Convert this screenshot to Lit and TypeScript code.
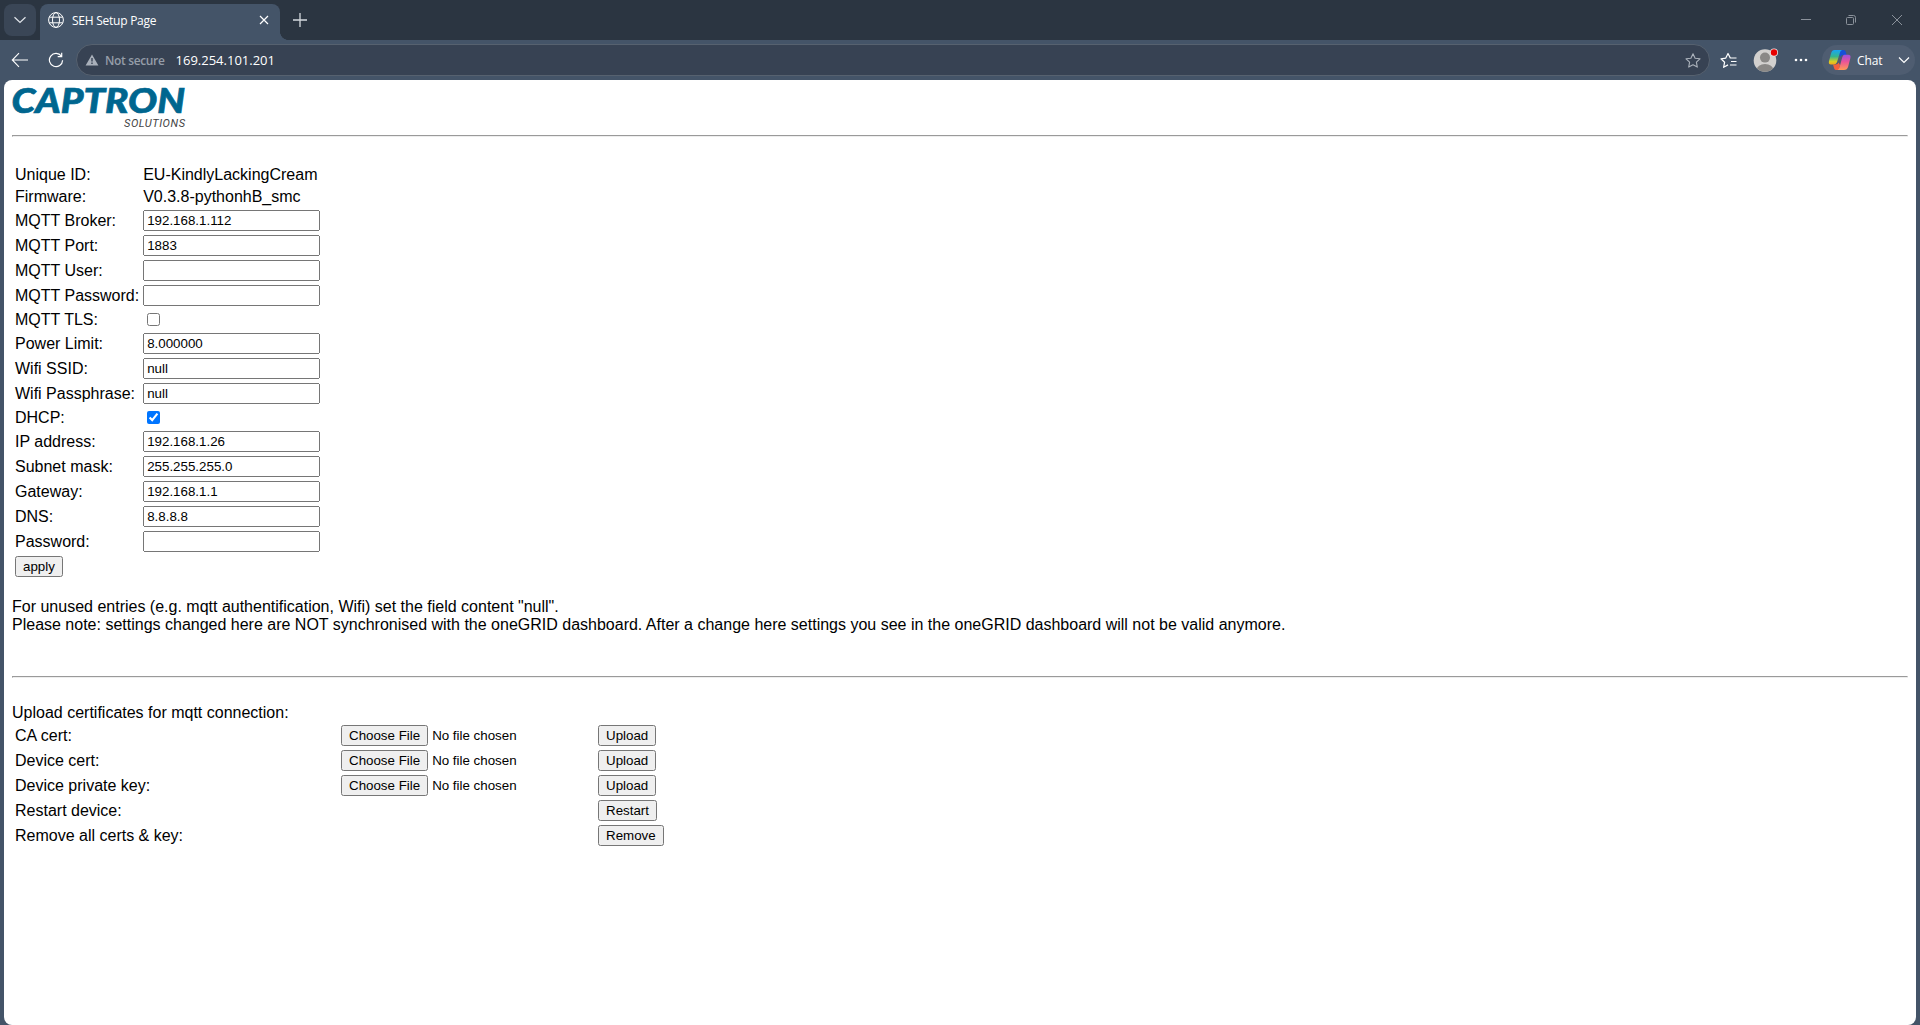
import { LitElement, html, css, nothing } from "lit";
import { customElement } from "lit/decorators.js";

type Field = { label: string; kind: "text" | "input" | "check"; value?: string; on?: boolean };

const FIELDS: Field[] = [
  { label: "Unique ID:", kind: "text", value: "EU-KindlyLackingCream" },
  { label: "Firmware:", kind: "text", value: "V0.3.8-pythonhB_smc" },
  { label: "MQTT Broker:", kind: "input", value: "192.168.1.112" },
  { label: "MQTT Port:", kind: "input", value: "1883" },
  { label: "MQTT User:", kind: "input", value: "" },
  { label: "MQTT Password:", kind: "input", value: "" },
  { label: "MQTT TLS:", kind: "check", on: false },
  { label: "Power Limit:", kind: "input", value: "8.000000" },
  { label: "Wifi SSID:", kind: "input", value: "null" },
  { label: "Wifi Passphrase:", kind: "input", value: "null" },
  { label: "DHCP:", kind: "check", on: true },
  { label: "IP address:", kind: "input", value: "192.168.1.26" },
  { label: "Subnet mask:", kind: "input", value: "255.255.255.0" },
  { label: "Gateway:", kind: "input", value: "192.168.1.1" },
  { label: "DNS:", kind: "input", value: "8.8.8.8" },
  { label: "Password:", kind: "input", value: "" },
];

const ACTIONS = [
  { label: "CA cert:", file: true, button: "Upload" },
  { label: "Device cert:", file: true, button: "Upload" },
  { label: "Device private key:", file: true, button: "Upload" },
  { label: "Restart device:", file: false, button: "Restart" },
  { label: "Remove all certs & key:", file: false, button: "Remove" },
];

const STAR = "M8 1.2 L10.1 5.7 L15 6.3 L11.4 9.7 L12.3 14.6 L8 12.2 L3.7 14.6 L4.6 9.7 L1 6.3 L5.9 5.7 Z";

@customElement("browser-bar")
class BrowserBar extends LitElement {
  static styles = css`
    :host { display: block; font-family: "Open Sans", "Noto Sans", sans-serif; color: #fff; }
    svg { display: block; flex: none; fill: none; stroke: currentColor; }
    .tabs { height: 40px; background: #2b3541; display: flex; align-items: flex-start; }
    .menu { width: 32px; height: 32px; margin: 4px 4px 0; border-radius: 8px; background: #3a4656; display: grid; place-items: center; color: #dfe3e8; }
    .tab { box-sizing: border-box; width: 240px; height: 36px; margin-top: 4px; padding: 0 11px 4px 8px; border-radius: 8px 8px 0 0; background: #445468; display: flex; align-items: center; }
    .foot { width: 8px; height: 8px; align-self: flex-end; background: radial-gradient(circle at 100% 0, transparent 7.6px, #445468 8px); }
    .title { flex: 1; margin-left: 8px; font-size: 12px; letter-spacing: -0.25px; }
    .plus { margin: 12px 0 0 4px; color: #d5d9de; }
    .win { margin-left: auto; display: flex; gap: 34px; padding: 14px 17px 0 0; color: #8b929b; }
    .nav { box-sizing: border-box; height: 40px; background: #445468; display: flex; align-items: center; padding-right: 5px; }
    .back { margin-left: 11px; }
    .reload { margin-left: 19px; }
    .url { box-sizing: border-box; flex: 1; height: 32px; margin-left: 12px; border: 1px solid #56616f; border-radius: 16px; background: #374253; display: flex; align-items: center; padding: 0 7px 0 8px; }
    .warn { color: #a9b0ba; }
    .secure { margin-left: 6px; font-size: 12px; font-weight: 600; letter-spacing: -0.35px; color: #959da8; }
    .addr { margin-left: 11px; font-size: 13px; flex: 1; }
    .fav { color: #abb2bb; }
    .list { margin-left: 10px; }
    .avatar { margin-left: 15px; }
    .dots { margin-left: 15px; }
    .chat { box-sizing: border-box; width: 93px; height: 30px; margin-left: 14px; border-radius: 15px; background: #4f5d71; display: flex; align-items: center; padding: 0 5px 0 6px; font-size: 12px; }
    .word { flex: 1; margin-left: 5px; letter-spacing: -0.1px; }
  `;
  render() {
    return html`
      <div class="tabs">
        <div class="menu"><svg width="14" height="8" stroke-width="1.3"><path d="M1.5 1.2 L7 6.4 L12.5 1.2" /></svg></div>
        <div class="tab">
          <svg width="16" height="16" stroke-width="1"><circle cx="8" cy="8" r="7.4" /><ellipse cx="8" cy="8" rx="3.5" ry="7.4" /><path d="M1.3 5.2 H14.7 M1.3 10.8 H14.7" /></svg>
          <span class="title">SEH Setup Page</span>
          <svg width="10" height="10" stroke-width="1.2"><path d="M1 1 L9 9 M9 1 L1 9" /></svg>
        </div>
        <div class="foot"></div>
        <svg class="plus" width="16" height="16" stroke-width="1.3"><path d="M8 1 V15 M1 8 H15" /></svg>
        <div class="win">
          <svg width="10" height="12" stroke-width="1"><path d="M0 5.5 H10" /></svg>
          <svg width="12" height="12" stroke-width="1"><rect x="1.5" y="3.5" width="7" height="7" rx="1" /><path d="M3.5 1.5 H8.5 Q10.5 1.5 10.5 3.5 V8.5" /></svg>
          <svg width="12" height="12" stroke-width="1"><path d="M1 1 L11 11 M11 1 L1 11" /></svg>
        </div>
      </div>
      <div class="nav">
        <svg class="back" width="18" height="16" stroke-width="1.1"><path d="M17 8 H1.5 M8 1.2 L1.3 8 L8 14.8" /></svg>
        <svg class="reload" width="16" height="16" stroke-width="1.2"><path d="M13.4 4.2 A6.6 6.6 0 1 0 14.6 8.2 M13.7 0.8 V4.6 H9.7" /></svg>
        <div class="url">
          <svg class="warn" width="14" height="12"><path fill="currentColor" stroke="none" fill-rule="evenodd" d="M7 0.4 L13.4 11.6 H0.6 Z M6.3 4 V7.6 H7.7 V4 Z M6.3 8.6 V10 H7.7 V8.6 Z" /></svg>
          <span class="secure">Not secure</span>
          <span class="addr">169.254.101.201</span>
          <svg class="fav" width="18" height="17" viewBox="-1 -0.5 18 17" stroke-width="1.1" stroke-linejoin="round"><path d=${STAR} /></svg>
        </div>
        <svg class="list" width="18" height="17" viewBox="0 -0.5 18 17" stroke-width="1.2" stroke-linejoin="round"><path d="M10.4 5.6 L8 1 L5.8 5.6 L1 6.3 L4.6 9.8 L3.6 14.8 L8 12.4 M10 5.5 H16.5 M11 9 H16.5 M10 12.5 H16.5" /></svg>
        <svg class="avatar" width="26" height="26">
          <defs><clipPath id="c"><circle cx="12" cy="13.5" r="11.3" /></clipPath></defs>
          <circle cx="12" cy="13.5" r="11.3" stroke="none" fill="#d2d0ce" />
          <g clip-path="url(#c)" stroke="none" fill="#8a8886"><circle cx="12" cy="10.6" r="5" /><ellipse cx="12" cy="23" rx="8.4" ry="6" /></g>
          <circle cx="21" cy="5.5" r="4" stroke="none" fill="#e9e5e5" /><circle cx="21" cy="5.5" r="3.2" stroke="none" fill="#e60000" />
        </svg>
        <svg class="dots" width="14" height="4"><g fill="currentColor" stroke="none"><circle cx="2" cy="2" r="1.3" /><circle cx="7" cy="2" r="1.3" /><circle cx="12" cy="2" r="1.3" /></g></svg>
        <div class="chat">
          <svg width="24" height="22">
            <defs>
              <linearGradient id="l" x1="0" y1="0" x2="0" y2="1"><stop offset="0" stop-color="#16a5f5" /><stop offset=".45" stop-color="#35b58f" /><stop offset=".8" stop-color="#d9cf22" /><stop offset="1" stop-color="#f5a51c" /></linearGradient>
              <linearGradient id="r" x1="0" y1="0" x2="0" y2="1"><stop offset="0" stop-color="#9a52e0" /><stop offset=".45" stop-color="#ea5399" /><stop offset="1" stop-color="#ff9a55" /></linearGradient>
            </defs>
            <g stroke="none">
              <path fill="#1650d8" d="M11 1 H15.5 Q17.3 1 17.8 3 L18.5 6 H15.2 Q13.3 6 12.3 8 L11 5 Z" />
              <path fill="#f4603d" d="M5 15.5 H7.5 Q10 15.5 10.6 13.5 L12 16 L11 21 H8.5 Q6.6 21 6.2 19.5 Z" />
              <path fill="url(#l)" d="M6.5 1 H14 Q12.4 1.6 11.8 4 L9.2 12.5 Q8.4 15.5 5.5 15.5 H3 Q0.2 15.5 1 12 L3.2 4 Q4 1 6.5 1 Z" />
              <path fill="url(#r)" d="M16 5.8 H20 Q23.2 5.8 22.4 9 L20.2 17.5 Q19.3 21 16 21 H9.5 Q11 20.4 11.6 18 L14.2 8.6 Q14.9 6.2 16 5.8 Z" />
            </g>
          </svg>
          <span class="word">Chat</span>
          <svg width="12" height="8" stroke-width="1.2"><path d="M1 1.5 L6 6.4 L11 1.5" /></svg>
        </div>
      </div>`;
  }
}

@customElement("setup-page")
class SetupPage extends LitElement {
  static styles = css`
    :host { display: block; box-sizing: border-box; height: 945px; padding: 8px; background: #fff; border-radius: 8px; font: 16px "Liberation Sans", Arial, sans-serif; color: #000; }
    .logo { display: block; overflow: visible; }
    .brand { font: italic 900 34px Lato, sans-serif; fill: #00668f; stroke: #00668f; stroke-width: 0.7px; }
    .sub { font: italic 11px Roboto, sans-serif; fill: #444; }
    hr { margin: 6px 0 8px; }
    .first { margin-top: 26px; }
    table { border-spacing: 2px; }
    td { padding: 1px; }
    input, button { font: 13.333px "Liberation Sans", Arial, sans-serif; }
    .check { display: block; margin: 3px 3px 3px 4px; }
    .box { box-sizing: border-box; width: 177px; height: 21px; display: inline-block; }
    .file { width: 253px; }
    .label { width: 322px; }
    .note { margin-top: 18px; line-height: 18px; }
    .rule { margin: 42px 0 26px; }
  `;
  cell(f: Field) {
    if (f.kind === "text") return f.value;
    if (f.kind === "check") return html`<input class="check" type="checkbox" .checked=${!!f.on} />`;
    return html`<input class="box" type="text" .value=${f.value ?? ""} />`;
  }
  render() {
    return html`
      <svg class="logo" width="176" height="41">
        <text class="brand" x="-0.5" y="25" textLength="173.5" lengthAdjust="spacingAndGlyphs">CAPTRON</text>
        <text class="sub" x="112" y="39" textLength="61">SOLUTIONS</text>
      </svg>
      <hr />
      <table class="first">
        ${FIELDS.map((f) => html`<tr><td>${f.label}</td><td>${this.cell(f)}</td></tr>`)}
        <tr><td><button>apply</button></td></tr>
      </table>
      <div class="note">For unused entries (e.g. mqtt authentification, Wifi) set the field content "null".<br />Please note: settings changed here are NOT synchronised with the oneGRID dashboard. After a change here settings you see in the oneGRID dashboard will not be valid anymore.</div>
      <hr class="rule" />
      <div>Upload certificates for mqtt connection:</div>
      <table>
        ${ACTIONS.map((a) => html`<tr><td class="label">${a.label}</td><td>${a.file ? html`<input class="file" type="file" />` : nothing}</td><td><button>${a.button}</button></td></tr>`)}
      </table>`;
  }
}

@customElement("app-root")
class AppRoot extends LitElement {
  static styles = css`
    :host { display: block; box-sizing: border-box; height: 1025px; overflow: hidden; background: #445468; }
    .page { margin: 0 4px; }
  `;
  render() {
    return html`<browser-bar></browser-bar><setup-page class="page"></setup-page>`;
  }
}
